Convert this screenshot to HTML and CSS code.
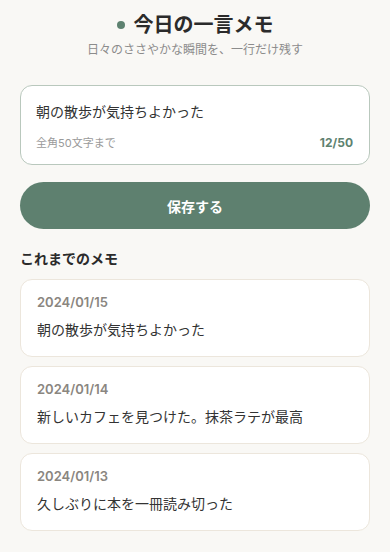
FILE: index.html
```html
<!DOCTYPE html>
<html lang="ja">
<head>
<meta charset="utf-8">
<title>今日の一言メモ</title>
<link rel="stylesheet" href="styles.css">
</head>
<body>
<main class="page">
  <header class="header">
    <h1 class="title"><span class="dot"></span>今日の一言メモ</h1>
    <p class="subtitle">日々のささやかな瞬間を、一行だけ残す</p>
  </header>

  <div class="entry">
    <input class="entry-input" type="text" value="朝の散歩が気持ちよかった" maxlength="50">
    <div class="entry-meta">
      <span class="hint">全角50文字まで</span>
      <span class="count">12/50</span>
    </div>
  </div>

  <button class="save" type="button">保存する</button>

  <h2 class="section">これまでのメモ</h2>

  <ul class="memos">
    <li class="memo">
      <div class="memo-date">2024/01/15</div>
      <div class="memo-text">朝の散歩が気持ちよかった</div>
    </li>
    <li class="memo">
      <div class="memo-date">2024/01/14</div>
      <div class="memo-text">新しいカフェを見つけた。抹茶ラテが最高</div>
    </li>
    <li class="memo">
      <div class="memo-date">2024/01/13</div>
      <div class="memo-text">久しぶりに本を一冊読み切った</div>
    </li>
  </ul>
</main>
</body>
</html>
```

FILE: styles.css
```css
* { box-sizing: border-box; }

html, body {
  margin: 0;
  padding: 0;
  background: #f9f8f5;
}

body {
  font-family: Inter, "Noto Sans CJK JP", sans-serif;
  color: #333;
}

.page {
  padding: 10px 20px 20px;
  display: flex;
  flex-direction: column;
}

.header {
  display: flex;
  flex-direction: column;
  align-items: center;
}

.title {
  margin: 0;
  display: flex;
  align-items: center;
  gap: 9px;
  font-size: 20px;
  line-height: 30px;
  font-weight: 700;
  color: #2b2b2b;
}

.dot {
  width: 8px;
  height: 8px;
  border-radius: 50%;
  background: #5e8270;
}

.subtitle {
  margin: 1px 0 0;
  font-size: 12px;
  line-height: 18px;
  color: #8c8c8c;
}

.entry {
  margin-top: 26px;
  background: #fff;
  border: 1.5px solid #b9c8bd;
  border-radius: 12px;
  padding: 15px 16px 13px 15px;
  display: flex;
  flex-direction: column;
  gap: 12px;
}

.entry-input {
  border: none;
  outline: none;
  padding: 0;
  margin: 0;
  background: transparent;
  font: inherit;
  font-size: 14px;
  line-height: 22px;
  height: 22px;
  color: #333;
  width: 100%;
}

.entry-meta {
  display: flex;
  justify-content: space-between;
  align-items: center;
  line-height: 16px;
}

.hint {
  font-size: 11px;
  color: #9a9a9a;
}

.count {
  font-size: 12px;
  font-weight: 700;
  color: #5e8270;
}

.save {
  margin-top: 17px;
  height: 47px;
  border: none;
  border-radius: 24px;
  background: #5e806f;
  color: #fff;
  font: inherit;
  font-size: 14px;
  font-weight: 700;
  cursor: pointer;
}

.section {
  margin: 20px 0 0;
  font-size: 14px;
  line-height: 20px;
  font-weight: 700;
  color: #2b2b2b;
}

.memos {
  list-style: none;
  margin: 10px 0 0;
  padding: 0;
  display: flex;
  flex-direction: column;
  gap: 9px;
}

.memo {
  background: #fff;
  border: 1px solid #ece6dc;
  border-radius: 12px;
  padding: 13px 16px 16px;
  display: flex;
  flex-direction: column;
  gap: 9px;
}

.memo-date {
  font-size: 13px;
  line-height: 18px;
  font-weight: 600;
  color: #8a8680;
}

.memo-text {
  font-size: 14px;
  line-height: 20px;
  color: #333;
}
```
